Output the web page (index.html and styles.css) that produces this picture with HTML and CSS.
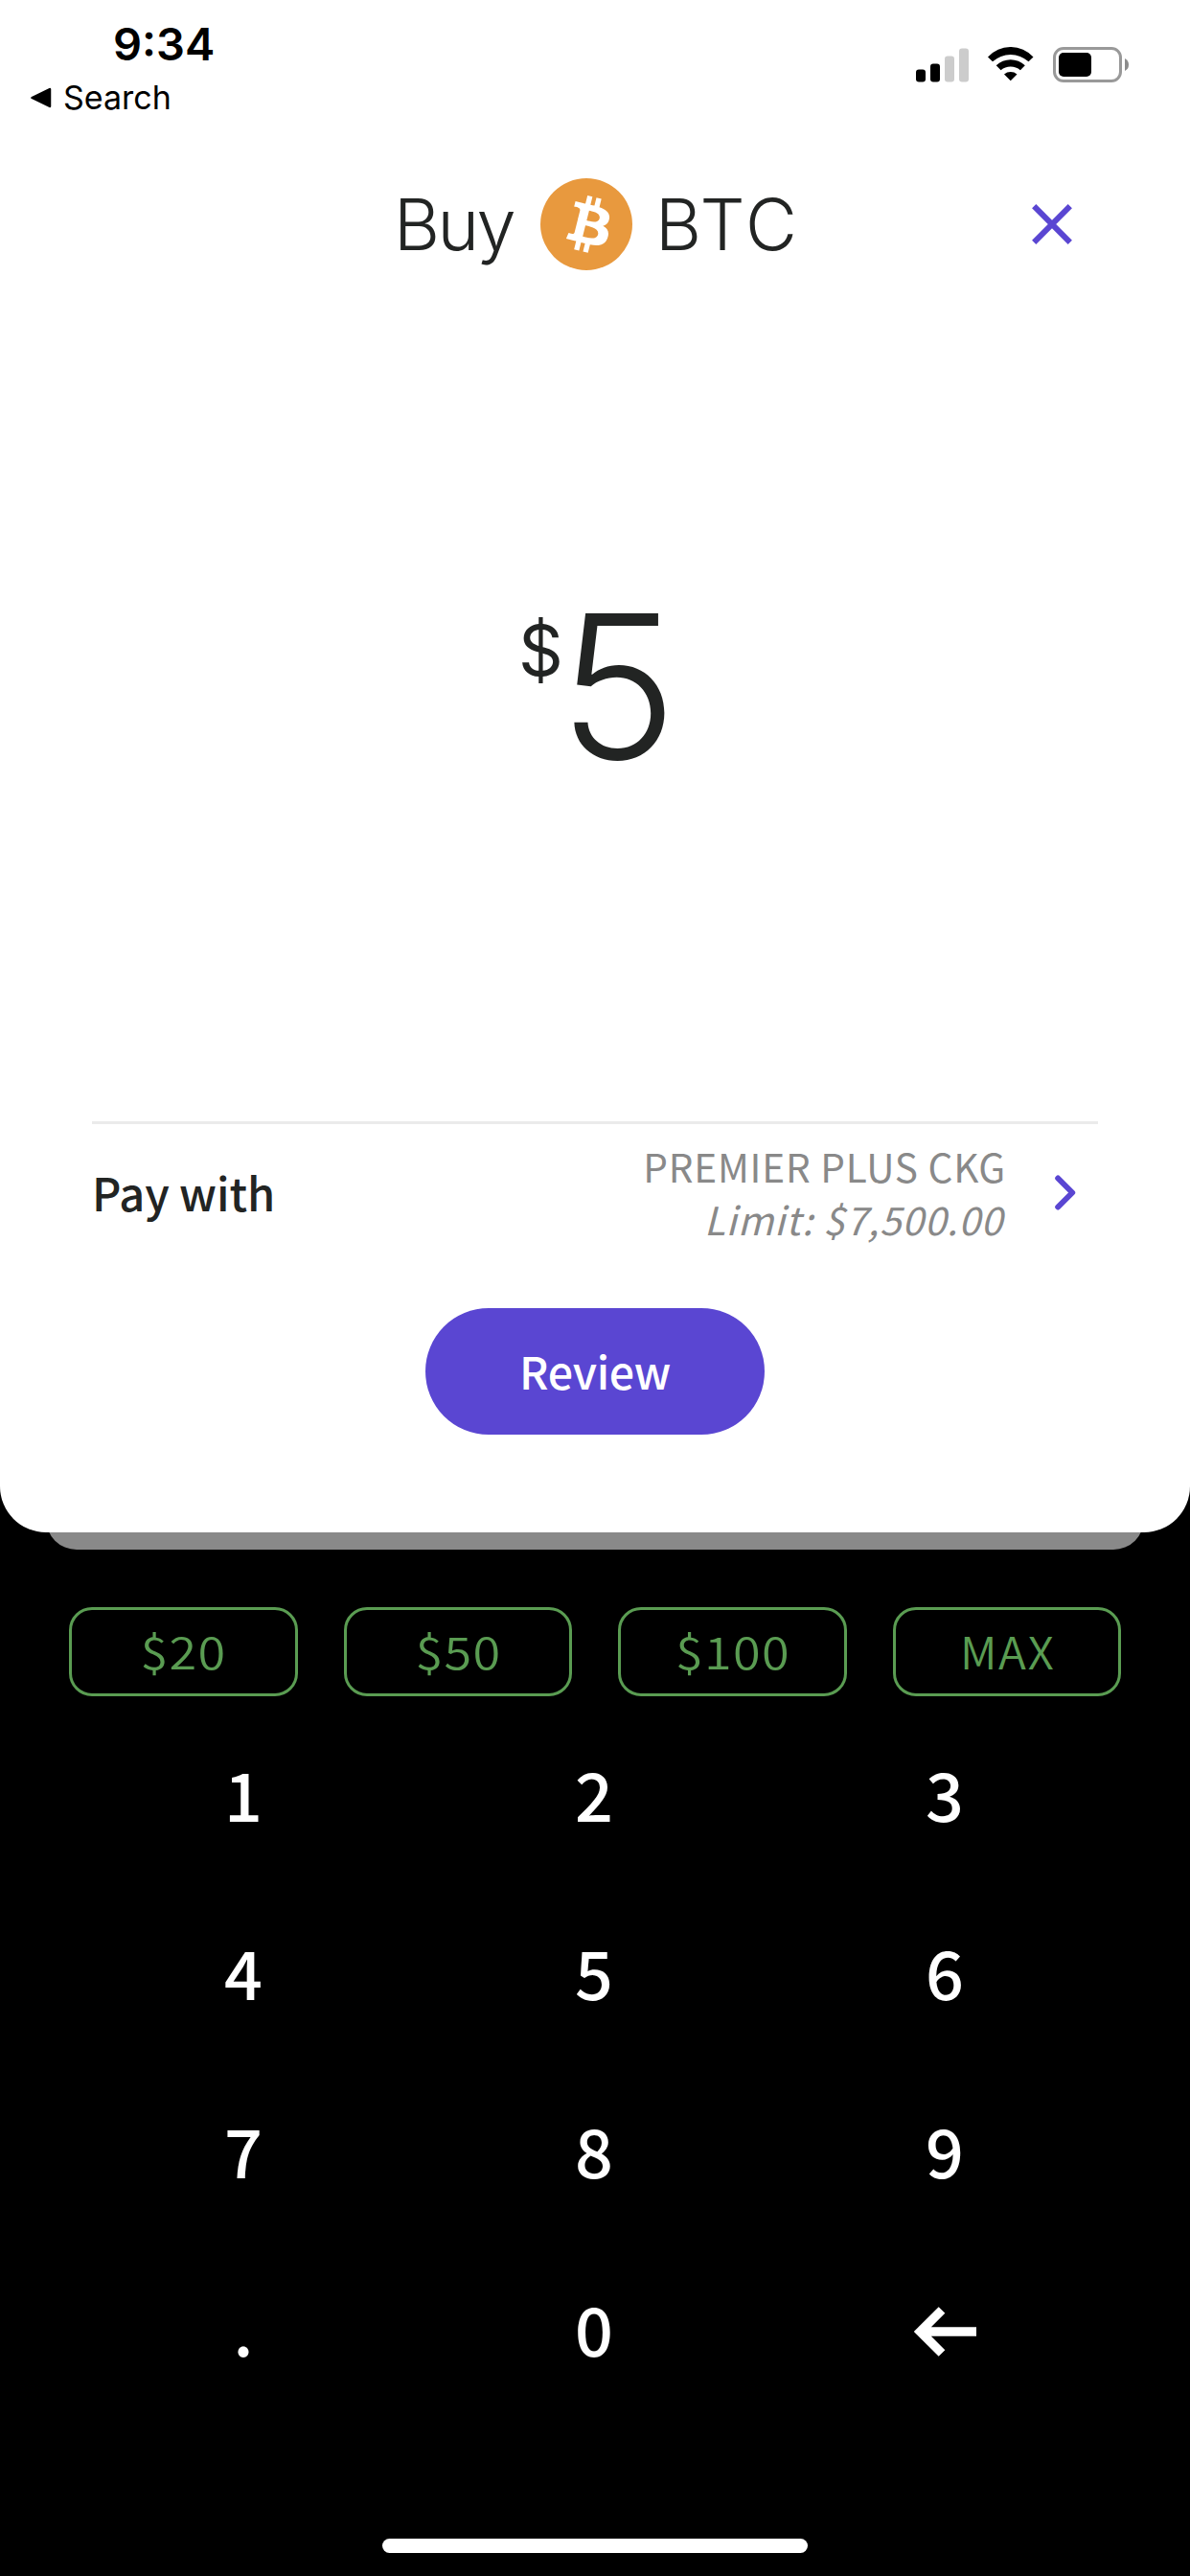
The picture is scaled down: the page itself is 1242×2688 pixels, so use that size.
FILE: index.html
```
<!DOCTYPE html>
<html lang="en">
<head>
<meta charset="utf-8">
<title>Buy BTC</title>
<link rel="stylesheet" href="styles.css">
</head>
<body>
<main class="screen">
  <section class="card">
    <div class="status">
      <div class="status-left">
        <div class="time">9:34</div>
        <div class="back">
          <svg width="22" height="22" viewBox="0 0 22 22"><path d="M1.5 11 L20 2 V20 Z" fill="#000" stroke="#000" stroke-width="2.5" stroke-linejoin="round"/></svg>
          <span>Search</span>
        </div>
      </div>
      <div class="status-icons">
        <svg width="55" height="36" viewBox="0 0 55 36">
          <rect x="0" y="22.5" width="10" height="13" rx="3"/>
          <rect x="15" y="16.5" width="10" height="19" rx="3"/>
          <rect x="30" y="8.5" width="10" height="27" rx="3" fill="#ccc"/>
          <rect x="45" y="0.5" width="10" height="35" rx="3" fill="#ccc"/>
        </svg>
        <svg width="48" height="37" viewBox="0 0 48 37">
          <path d="M0 10.5 A32.1 32.1 0 0 1 47.5 10.5 L42.5 15.3 A27.7 27.7 0 0 0 5 15.3 Z"/>
          <path d="M8.7 19.2 A21.75 21.75 0 0 1 38.8 19.2 L33.9 24.2 A15.9 15.9 0 0 0 13.6 24.2 Z"/>
          <path d="M17 28.4 A10.4 10.4 0 0 1 30.5 28.4 L23.75 35.3 Z"/>
        </svg>
        <svg width="79" height="37" viewBox="0 0 79 37">
          <rect x="1.5" y="1.5" width="69" height="34" rx="9.5" fill="none" stroke="#999" stroke-width="3"/>
          <rect x="6" y="6" width="34" height="25" rx="5"/>
          <path d="M75 12 Q79 14 79 18.5 Q79 23 75 25 Z" fill="#8c8c8c"/>
        </svg>
      </div>
    </div>

    <header class="title">
      <span class="title-action">Buy</span>
      <svg class="coin" width="96" height="96" viewBox="0 0 32 32">
        <circle cx="16" cy="16" r="16" fill="#e8993e"/>
        <path fill="#fff" d="M23.989 14.02c.314-2.096-1.283-3.223-3.465-3.975l.708-2.84-1.728-.43-.69 2.765c-.454-.114-.92-.22-1.385-.326l.695-2.783L16.396 6l-.708 2.839c-.376-.086-.746-.17-1.104-.26l.002-.009-2.384-.595-.46 1.846s1.283.294 1.256.312c.7.175.826.638.805 1.006l-.806 3.235c.048.012.11.03.18.057l-.183-.045-1.13 4.532c-.086.212-.303.531-.793.41.018.025-1.256-.313-1.256-.313l-.858 1.978 2.25.561c.418.105.828.215 1.231.318l-.715 2.872 1.727.43.708-2.84c.472.127.93.245 1.378.357l-.706 2.828 1.728.43.715-2.866c2.948.558 5.164.333 6.097-2.333.752-2.146-.037-3.385-1.588-4.192 1.13-.26 1.98-1.003 2.207-2.538zm-3.95 5.538c-.533 2.147-4.148.986-5.32.695l.95-3.805c1.172.293 4.929.872 4.37 3.11zm.535-5.569c-.487 1.953-3.495.96-4.47.717l.86-3.45c.975.243 4.118.696 3.61 2.733z"/>
      </svg>
      <span class="title-asset">BTC</span>
      <svg class="close" width="42" height="42" viewBox="0 0 42 42"><path d="M2.2 2.2 L39.8 39.8 M39.8 2.2 L2.2 39.8" stroke="#5a46d2" stroke-width="6" fill="none"/></svg>
    </header>

    <div class="amount">
      <span class="currency">$</span>
      <span class="value">5</span>
    </div>

    <div class="pay">
      <span class="pay-label">Pay with</span>
      <div class="account">
        <div>PREMIER PLUS CKG</div>
        <div class="limit">Limit: $7,500.00</div>
      </div>
      <svg width="22" height="37" viewBox="0 0 22 37"><path d="M3.2 3.5 L18.2 18.5 L3.2 33.5" stroke="#5a46d2" stroke-width="6" stroke-linecap="round" stroke-linejoin="round" fill="none"/></svg>
    </div>

    <button class="review">Review</button>
  </section>
  <div class="card-under"></div>

  <div class="chips">
    <button class="chip"><span>$20</span></button>
    <button class="chip"><span>$50</span></button>
    <button class="chip"><span>$100</span></button>
    <button class="chip chip-max"><span>MAX</span></button>
  </div>

  <div class="keypad">
    <button class="key">1</button><button class="key">2</button><button class="key">3</button>
    <button class="key">4</button><button class="key">5</button><button class="key">6</button>
    <button class="key">7</button><button class="key">8</button><button class="key">9</button>
    <button class="key">.</button><button class="key">0</button>
    <button class="key key-delete"><svg width="65" height="52" viewBox="0 0 65 52"><path d="M29 3.5 L6.5 26 L29 48.5 M6.5 26 H65" stroke="#fff" stroke-width="9.4" fill="none"/></svg></button>
  </div>

  <div class="home"></div>
</main>
</body>
</html>
```
FILE: styles.css
```
* { box-sizing: border-box; }
body { margin: 0; background: #000; }
svg { display: block; flex: none; }
button { margin: 0; padding: 0; border: 0; background: none; font: inherit; color: inherit; }

.screen {
  width: 1242px;
  height: 2688px;
  display: flex;
  flex-direction: column;
  background: #000;
  color: #222423;
  font-family: "Noto Sans CJK JP", "Noto Sans", sans-serif;
  overflow: hidden;
}

.card {
  height: 1599px;
  flex: none;
  display: flex;
  flex-direction: column;
  background: #fff;
  border-radius: 0 0 48px 48px;
  z-index: 1;
}
.card-under {
  height: 50px;
  flex: none;
  margin: -32px 48px 0;
  background: #898989;
  border-radius: 0 0 32px 32px;
}

.status {
  height: 186px;
  display: flex;
  justify-content: space-between;
  padding: 18px 64px 0 32px;
  color: #000;
  font-family: Inter, sans-serif;
}
.time { padding-left: 86px; font-size: 47px; font-weight: 600; line-height: 56px; }
.back {
  display: flex;
  align-items: center;
  gap: 12px;
  margin-top: 8px;
  font-size: 34px;
  font-weight: 400;
  line-height: 40px;
}
.status-icons { display: flex; align-items: center; gap: 20px; height: 37px; margin-top: 31px; }

.title {
  height: 96px;
  display: flex;
  align-items: center;
  padding: 0 123px 0 411px;
  font: 300 74px/96px Inter, sans-serif;
}
.title-action { letter-spacing: -2.6px; }
.coin { margin: 0 24px 0 28px; }
.title-asset { letter-spacing: 2.6px; }
.close { margin-left: auto; }

.amount {
  height: 888px;
  display: flex;
  align-items: flex-start;
  padding: 329px 0 0 541px;
  font-family: Inter, sans-serif;
}
.currency { margin-top: 31px; font-size: 73px; font-weight: 400; line-height: 74px; }
.value { margin-left: -5px; font-size: 209px; font-weight: 300; line-height: 210px; }

.pay {
  height: 145px;
  display: flex;
  align-items: center;
  margin: 0 96px;
  padding-right: 23px;
  border-top: 3px solid #ebebeb;
}
.pay-label { font-size: 47px; font-weight: 500; line-height: 68px; letter-spacing: -0.1px; }
.account {
  margin: 0 51px 0 auto;
  text-align: right;
  color: #898989;
  font-size: 40.5px;
  line-height: 55px;
  letter-spacing: 0.8px;
}
.limit { padding-right: 3px; font-style: italic; letter-spacing: 0.9px; }

.review {
  width: 354px;
  height: 132px;
  margin: 50px auto 0;
  padding-bottom: 3px;
  border-radius: 66px;
  background: #5a46d2;
  color: #fff;
  font-size: 46.5px;
  font-weight: 500;
  letter-spacing: -0.3px;
}

.chips {
  display: grid;
  grid-template-columns: repeat(4, 1fr);
  gap: 48px;
  margin: 60px 72px 0;
}
.chip {
  height: 93px;
  padding: 0 0 4px 1px;
  border: 3px solid #5a9c52;
  border-radius: 24px;
  color: #5a9c52;
  font-size: 47px;
  font-weight: 350;
  line-height: 60px;
  letter-spacing: 1.2px;
}
.chip span { display: inline-block; transform: scaleX(1.11); }
.chip-max { letter-spacing: 1.5px; }
.chip-max span { transform: scaleX(1.02); }

.keypad {
  display: grid;
  grid-template-columns: repeat(3, 366px);
  grid-auto-rows: 186px;
  margin: 8px 73px 0 71px;
  color: #fff;
  font-size: 70px;
  font-weight: 500;
  line-height: 100px;
}
.key { display: flex; align-items: center; justify-content: center; }
.key-delete { padding-top: 8px; }

.home {
  width: 444px;
  height: 15px;
  margin: auto auto 24px;
  border-radius: 7.5px;
  background: #fff;
}
```
